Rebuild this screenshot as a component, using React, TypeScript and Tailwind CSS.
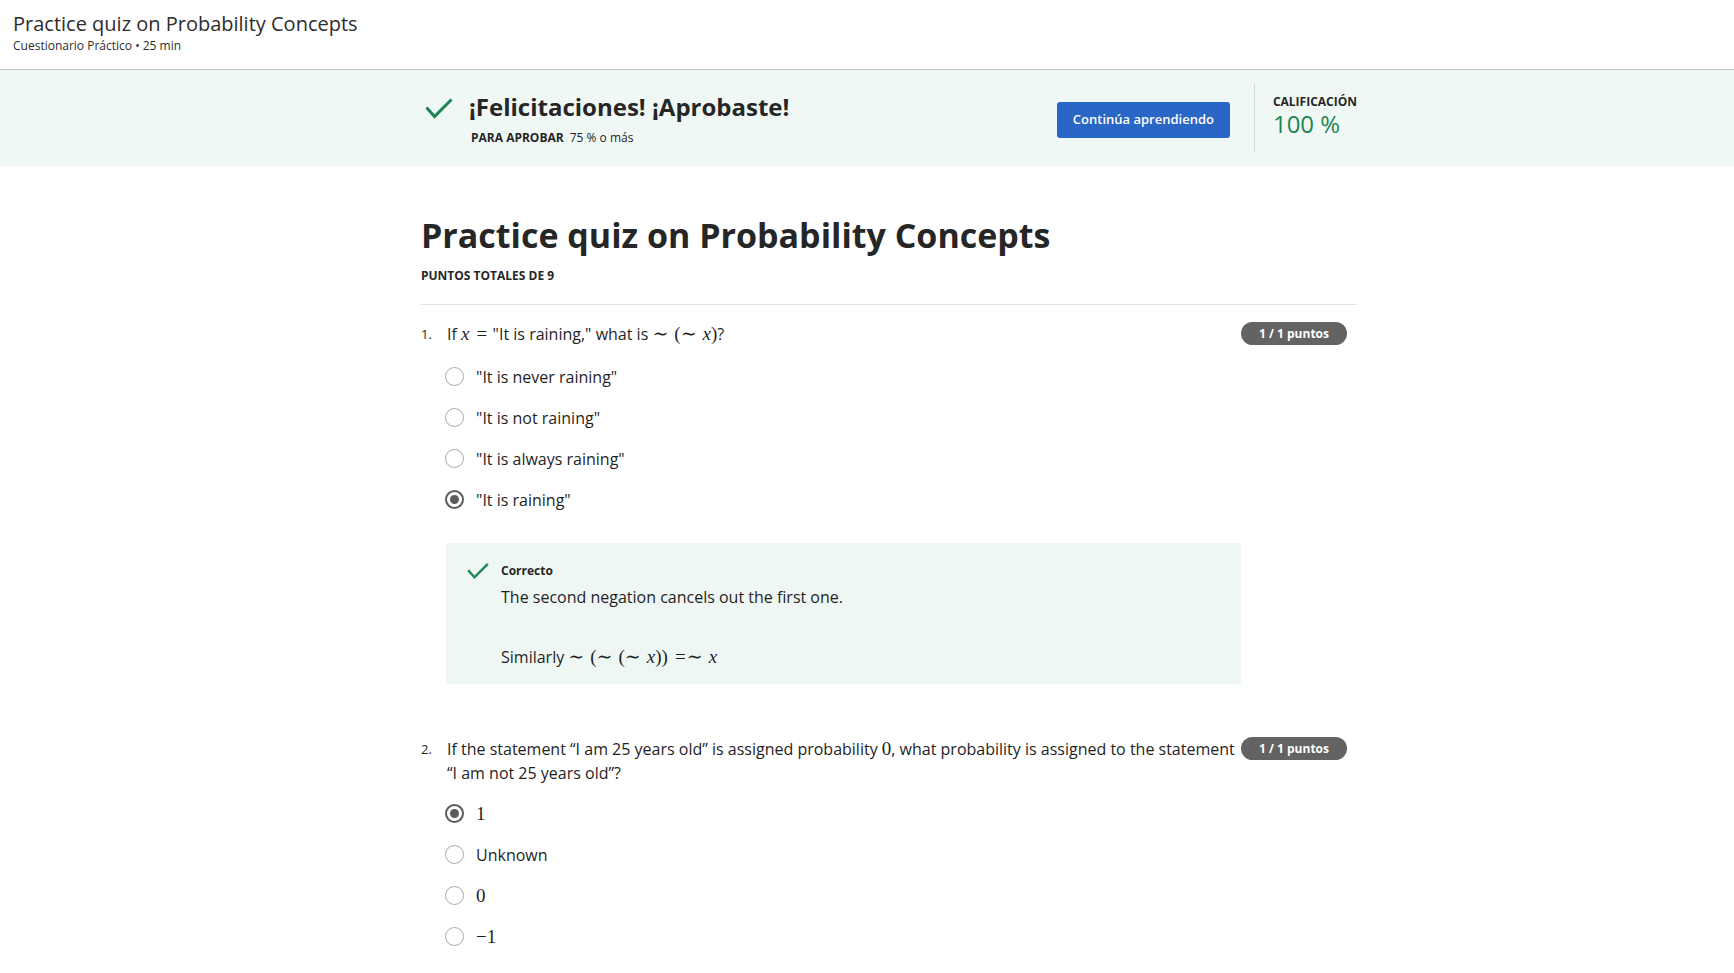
import React from "react";

const M = ({ children }: { children: React.ReactNode }) => (
  <span className="font-['Liberation_Serif','DejaVu_Serif',serif] text-[19px] leading-[24px]">{children}</span>
);
const I = ({ children }: { children: React.ReactNode }) => <span className="italic">{children}</span>;
const S = () => <span className="inline-block w-[6px]" />;
const Eq = () => <span className="inline-block w-[13px] text-center">=</span>;

const Check = ({ className }: { className?: string }) => (
  <svg viewBox="0 0 28 21" className={className} fill="none">
    <path d="M1.5 9.5 L9.5 18.5 L26.5 1.5" stroke="#1f8354" strokeWidth="3" strokeLinecap="butt" strokeLinejoin="miter" />
  </svg>
);

const Radio = ({ checked }: { checked?: boolean }) =>
  checked ? (
    <span className="flex h-[19px] w-[19px] shrink-0 items-center justify-center rounded-full border-2 border-[#5b5b5b] bg-white">
      <span className="h-[9px] w-[9px] rounded-full bg-[#5b5b5b]" />
    </span>
  ) : (
    <span className="h-[19px] w-[19px] shrink-0 rounded-full border-[1.5px] border-[#a8a8a8] bg-white" />
  );

const Option = ({ checked, children }: { checked?: boolean; children: React.ReactNode }) => (
  <div className="flex h-[41px] items-center pl-[24px]">
    <Radio checked={checked} />
    <span className="ml-[12px] text-[16px] leading-[24px] text-[#1f1f1f]">{children}</span>
  </div>
);

const Badge = () => (
  <span className="mr-[10px] ml-[5px] flex h-[23px] w-[106px] shrink-0 items-center justify-center rounded-full bg-[#636363] text-[12px] font-bold text-white">
    1 / 1 puntos
  </span>
);

export default function App() {
  return (
    <div className="min-h-screen bg-white font-['Open_Sans',sans-serif] text-[#1f1f1f]">
      <header className="h-[70px] border-b border-[#c4c4c4] px-[13px] pt-[10px]">
        <div className="text-[20px] leading-[28px] text-[#2d2d2d]">Practice quiz on Probability Concepts</div>
        <div className="text-[12px] leading-[16px] text-[#2d2d2d]">Cuestionario Práctico • 25 min</div>
      </header>

      <section className="h-[96px] bg-[#f0f8f5]">
        <div className="ml-[421px] flex h-full w-[936px] items-center">
          <div className="flex flex-1 items-start pl-[4px]">
            <Check className="mt-[7px] h-[21px] w-[28px]" />
            <div className="ml-[16px]">
              <div className="text-[24px] font-bold leading-[32px] text-[#262626]">¡Felicitaciones! ¡Aprobaste!</div>
              <div className="mt-[7px] flex items-center text-[12px] leading-[16px] text-[#262626]">
                <span className="ml-[2px] font-bold">PARA APROBAR</span>
                <span className="ml-[6px]">75 % o más</span>
              </div>
            </div>
          </div>
          <button className="mt-[4px] h-[36px] w-[173px] rounded-[3px] bg-[#2a66c6] text-[13px] font-semibold text-white">
            Continúa aprendiendo
          </button>
          <div className="ml-[24px] h-[68px] w-px bg-[#d6d6d6]" />
          <div className="mb-[5px] ml-[18px] flex flex-col">
            <span className="text-[12px] font-bold leading-[16px] text-[#262626]">CALIFICACIÓN</span>
            <span className="text-[24px] leading-[28px] text-[#1f8354]">100 %</span>
          </div>
        </div>
      </section>

      <main className="ml-[421px] w-[936px]">
        <h1 className="mt-[48px] text-[34px] font-bold leading-[42px] text-[#262626]">Practice quiz on Probability Concepts</h1>
        <div className="mt-[12px] text-[12px] font-bold leading-[16px] text-[#262626]">PUNTOS TOTALES DE 9</div>
        <div className="mt-[20px] h-px bg-[#e1e1e1]" />

        {/* Question 1 */}
        <div className="mt-[17px] flex items-start">
          <span className="w-[26px] shrink-0 text-[13px] leading-[24px]">1.</span>
          <div className="flex-1 text-[16px] leading-[24px]">
            If <M><I>x</I><S /><Eq /></M> "It is raining," what is <M>∼<S />(∼<S /><I>x</I>)</M>?
          </div>
          <Badge />
        </div>
        <div className="mt-[10px]">
          <Option>"It is never raining"</Option>
          <Option>"It is not raining"</Option>
          <Option>"It is always raining"</Option>
          <Option checked>"It is raining"</Option>
        </div>

        <div className="mt-[23px] ml-[25px] h-[141px] w-[795px] bg-[#eef7f4] pl-[21px] pt-[20px]">
          <div className="flex items-start">
            <Check className="mt-[-1px] h-[18px] w-[22px]" />
            <div className="ml-[12px]">
              <div className="text-[12px] font-bold leading-[16px] text-[#262626]">Correcto</div>
              <div className="mt-[6px] text-[16px] leading-[24px]">The second negation cancels out the first one.</div>
              <div className="mt-[36px] text-[16px] leading-[24px]">
                Similarly <M>∼<S />(∼<S />(∼<S /><I>x</I>))<S /><Eq />∼<S /><I>x</I></M>
              </div>
            </div>
          </div>
        </div>

        {/* Question 2 */}
        <div className="mt-[53px] flex items-start">
          <span className="w-[26px] shrink-0 text-[13px] leading-[24px]">2.</span>
          <div className="flex-1 text-[16px] leading-[24px]">
            If the statement “I am 25 years old” is assigned probability <M>0</M>, what probability is assigned to the statement “I am not 25 years old”?
          </div>
          <Badge />
        </div>
        <div className="mt-[8px]">
          <Option checked><M>1</M></Option>
          <Option>Unknown</Option>
          <Option><M>0</M></Option>
          <Option><M>−1</M></Option>
        </div>
      </main>
    </div>
  );
}
